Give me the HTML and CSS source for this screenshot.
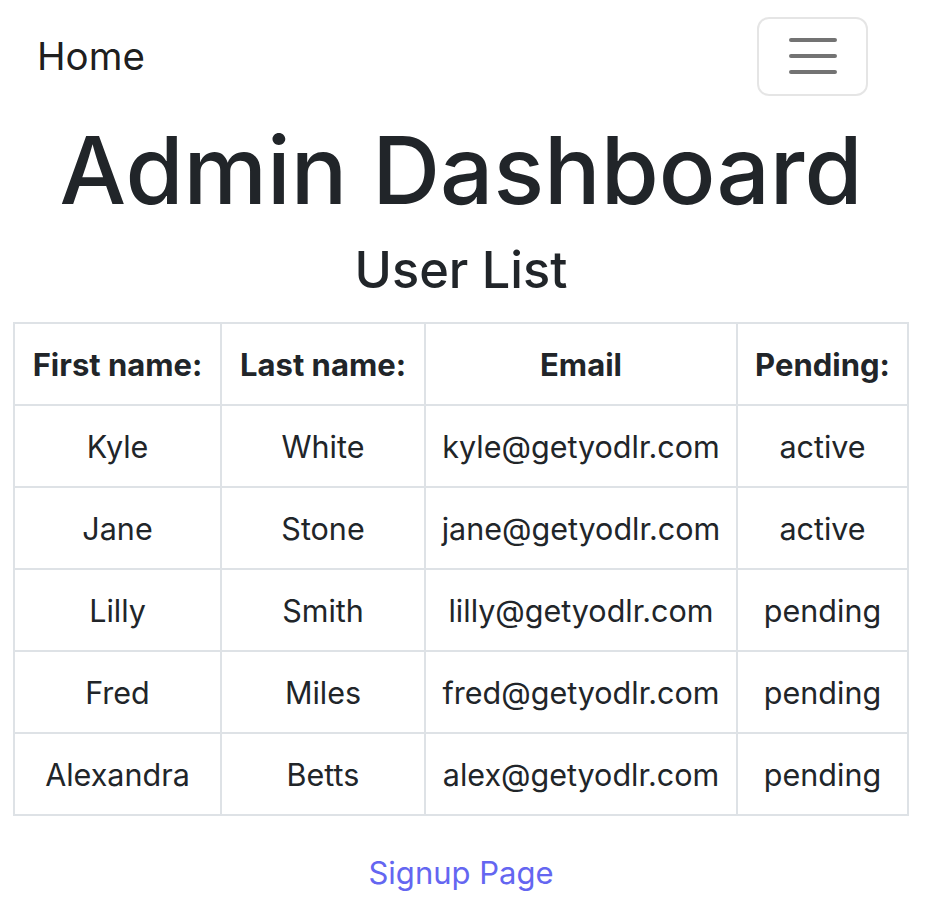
FILE: index.html
```html
<!DOCTYPE html>
<html lang="en">
<head>
<meta charset="utf-8">
<title>Admin Dashboard</title>
<link rel="stylesheet" href="styles.css">
</head>
<body>
<div class="page">
  <nav class="navbar">
    <a class="brand" href="#">Home</a>
    <button class="toggler" type="button" aria-label="Toggle navigation">
      <svg class="toggler-icon" viewBox="0 0 30 30" width="60" height="60">
        <path stroke="rgba(0,0,0,0.55)" stroke-linecap="round" stroke-width="2" d="M4 7h22M4 15h22M4 23h22"/>
      </svg>
    </button>
  </nav>
  <h1 class="title">Admin Dashboard</h1>
  <h2 class="subtitle">User List</h2>
  <table class="users">
    <colgroup>
      <col class="c-first"><col class="c-last"><col class="c-email"><col class="c-status">
    </colgroup>
    <thead>
      <tr><th>First name:</th><th>Last name:</th><th>Email</th><th>Pending:</th></tr>
    </thead>
    <tbody>
      <tr><td>Kyle</td><td>White</td><td>kyle@getyodlr.com</td><td>active</td></tr>
      <tr><td>Jane</td><td>Stone</td><td>jane@getyodlr.com</td><td>active</td></tr>
      <tr><td>Lilly</td><td>Smith</td><td>lilly@getyodlr.com</td><td>pending</td></tr>
      <tr><td>Fred</td><td>Miles</td><td>fred@getyodlr.com</td><td>pending</td></tr>
      <tr><td>Alexandra</td><td>Betts</td><td>alex@getyodlr.com</td><td>pending</td></tr>
    </tbody>
  </table>
  <div class="footer-link"><a href="#">Signup Page</a></div>
</div>
</body>
</html>
```
FILE: styles.css
```css
html, body {
  margin: 0;
  padding: 0;
  background: #fff;
}
body {
  font-family: Inter, "Noto Sans", sans-serif;
  color: #212529;
}
.page {
  width: 922px;
  display: flex;
  flex-direction: column;
  align-items: center;
}
.navbar {
  align-self: stretch;
  display: flex;
  align-items: center;
  justify-content: space-between;
  padding: 16px 54px 0 37px;
  height: 80px;
}
.brand {
  font-size: 38.5px;
  color: rgba(0,0,0,0.9);
  text-decoration: none;
  line-height: 1;
}
.toggler {
  width: 111px;
  height: 79px;
  border: 2px solid rgba(0,0,0,0.1);
  border-radius: 12px;
  background: transparent;
  display: flex;
  align-items: center;
  justify-content: center;
  padding: 0;
}
.toggler-icon {
  display: block;
}
.title {
  font-size: 94px;
  font-weight: 500;
  line-height: 1.2;
  margin: 18px 0 0;
}
.subtitle {
  font-size: 50.5px;
  font-weight: 500;
  line-height: 1.2;
  margin: 13px 0 22px;
}
.users {
  width: 894px;
  border-collapse: collapse;
  table-layout: fixed;
  font-size: 30.5px;
}
.c-first { width: 207px; }
.c-last { width: 204px; }
.c-email { width: 312px; }
.c-status { width: 171px; }
.users th, .users td {
  border: 2px solid #dee2e6;
  padding: 17px 0 15px;
  height: 48px;
  line-height: 48px;
  text-align: center;
  white-space: nowrap;
}
.users th {
  font-weight: 700;
  font-size: 31px;
}
.footer-link {
  margin-top: 38px;
  font-size: 31px;
}
.footer-link a {
  color: #6466f1;
  text-decoration: none;
}
```
